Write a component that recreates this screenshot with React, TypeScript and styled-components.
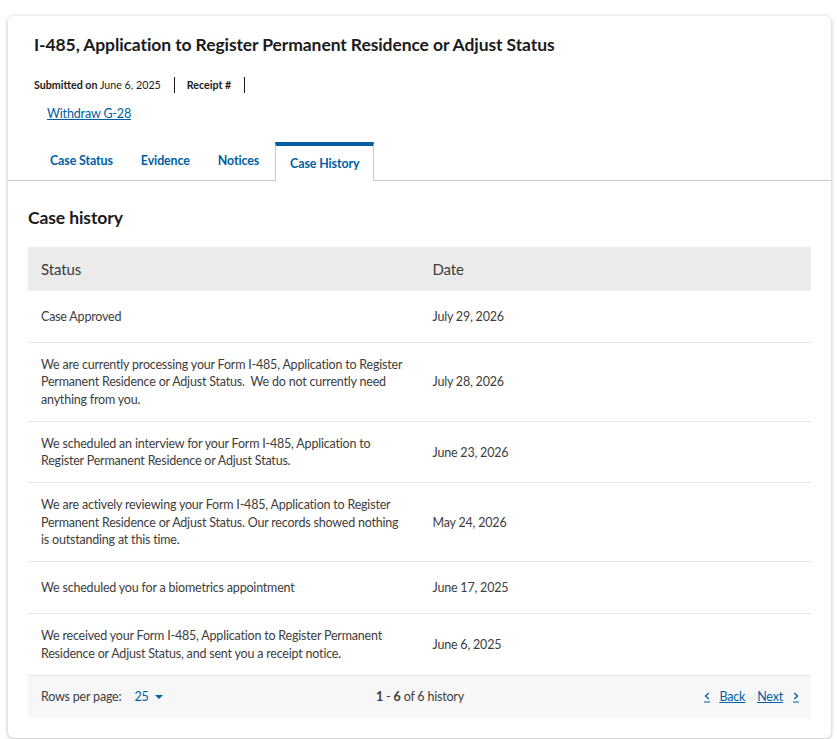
import React from "react";
import styled, { createGlobalStyle } from "styled-components";

const GlobalStyle = createGlobalStyle`
  html, body {
    margin: 0;
    background: #fff;
    font-family: Lato, "Liberation Sans", sans-serif;
    color: #1b1b1b;
  }
`;

const Page = styled.div`
  padding: 16px 6px 2px 8px;
`;

const Card = styled.section`
  background: #fff;
  border-radius: 6px;
  box-shadow: 0 1px 4px rgba(0, 0, 0, 0.28);
  padding-bottom: 20px;
`;

const Header = styled.header`
  padding: 16px 26px 0;
`;

const Title = styled.h1`
  margin: 0;
  font-size: 17.5px;
  letter-spacing: -0.1px;
  line-height: 26px;
  font-weight: 700;
  color: #1b1b1b;
`;

const Meta = styled.div`
  display: flex;
  align-items: center;
  margin-top: 19px;
  font-size: 10.7px;
  line-height: 16px;
  color: #1b1b1b;
`;

const MetaItem = styled.span`
  padding-right: 13px;
  margin-right: 12px;
  border-right: 1px solid #1b1b1b;
  b {
    font-weight: 700;
  }
`;

const TextLink = styled.a`
  color: #005ea2;
  text-decoration: underline;
  cursor: pointer;
`;

const WithdrawLink = styled(TextLink)`
  display: inline-block;
  margin: 12px 0 0 13px;
  font-size: 12.5px;
  letter-spacing: -0.15px;
  line-height: 18px;
`;

const TabBar = styled.nav`
  display: flex;
  align-items: flex-end;
  margin-top: 19px;
  padding-left: 28px;
  height: 38px;
  border-bottom: 1px solid #c9c9c9;
`;

const Tab = styled.a<{ $active?: boolean }>`
  display: block;
  padding: 0 14px;
  font-size: 12.4px;
  letter-spacing: -0.1px;
  font-weight: 700;
  color: #005ea2;
  text-decoration: none;
  height: 38px;
  line-height: 38px;
  ${({ $active }) =>
    $active &&
    `
    margin-left: 2px;
    height: 35px;
    line-height: 35px;
    margin-bottom: -1px;
    background: #fff;
    border-top: 4px solid #005ea2;
    border-left: 1px solid #c9c9c9;
    border-right: 1px solid #c9c9c9;
  `}
`;

const Body = styled.div`
  padding: 24px 20px 0;
`;

const SectionTitle = styled.h2`
  margin: 0 0 16px;
  font-size: 17.5px;
  letter-spacing: -0.1px;
  line-height: 26px;
  font-weight: 700;
  color: #1b1b1b;
`;

const Table = styled.table`
  width: 100%;
  border-collapse: collapse;
  table-layout: fixed;
`;

const HeadCell = styled.th`
  background: #ebebeb;
  text-align: left;
  font-weight: 400;
  font-size: 15px;
  letter-spacing: -0.1px;
  color: #3d3d3d;
  height: 44px;
  padding: 0 13px;
`;

const Row = styled.tr`
  border-bottom: 1px solid #e6e6e6;
`;

const Cell = styled.td`
  height: 25px;
  padding: 13px 13px;
  font-size: 12.5px;
  letter-spacing: -0.2px;
  line-height: 17.3px;
  color: #3d3d3d;
  vertical-align: middle;
`;

const Footer = styled.div`
  display: grid;
  grid-template-columns: 1fr auto 1fr;
  align-items: center;
  height: 42px;
  padding: 0 12px 0 13px;
  background: #f7f7f7;
  font-size: 12.5px;
  letter-spacing: -0.2px;
  color: #3d3d3d;
`;

const RowsPer = styled.div`
  display: flex;
  align-items: center;
  gap: 13px;
`;

const RowsSelect = styled.span`
  display: inline-flex;
  align-items: center;
  gap: 6px;
  color: #005ea2;
`;

const Caret = styled.span`
  width: 0;
  height: 0;
  border-left: 4px solid transparent;
  border-right: 4px solid transparent;
  border-top: 4px solid #005ea2;
`;

const Pager = styled.div`
  justify-self: end;
  display: flex;
  align-items: center;
  gap: 12px;
`;

const PagerLink = styled(TextLink)`
  display: inline-flex;
  align-items: center;
  gap: 10px;
`;

// small chevron with its own underline, as the link text has one
const Chevron = ({ dir }: { dir: "left" | "right" }) => (
  <svg width="6" height="13" viewBox="0 0 6 13" aria-hidden="true">
    <path
      d={dir === "left" ? "M4.8 3 L1.5 6 L4.8 9" : "M1.2 3 L4.5 6 L1.2 9"}
      fill="none"
      stroke="#005ea2"
      strokeWidth="1.3"
    />
    <line x1="0" y1="12" x2="6" y2="12" stroke="#005ea2" strokeWidth="1" />
  </svg>
);

const history = [
  { status: "Case Approved", date: "July 29, 2026" },
  {
    status:
      "We are currently processing your Form I-485, Application to Register Permanent Residence or Adjust Status.\u00a0 We do not currently need anything from you.",
    date: "July 28, 2026",
  },
  {
    status:
      "We scheduled an interview for your Form I-485, Application to Register Permanent Residence or Adjust Status.",
    date: "June 23, 2026",
  },
  {
    status:
      "We are actively reviewing your Form I-485, Application to Register Permanent Residence or Adjust Status. Our records showed nothing is outstanding at this time.",
    date: "May 24, 2026",
  },
  { status: "We scheduled you for a biometrics appointment", date: "June 17, 2025" },
  {
    status:
      "We received your Form I-485, Application to Register Permanent Residence or Adjust Status, and sent you a receipt notice.",
    date: "June 6, 2025",
  },
];

export default function App() {
  return (
    <Page>
      <GlobalStyle />
      <Card>
        <Header>
          <Title>I-485, Application to Register Permanent Residence or Adjust Status</Title>
          <Meta>
            <MetaItem>
              <b>Submitted on</b> June 6, 2025
            </MetaItem>
            <MetaItem>
              <b>Receipt #</b>
            </MetaItem>
          </Meta>
          <WithdrawLink>Withdraw G-28</WithdrawLink>
        </Header>
        <TabBar>
          <Tab>Case Status</Tab>
          <Tab>Evidence</Tab>
          <Tab>Notices</Tab>
          <Tab $active>Case History</Tab>
        </TabBar>
        <Body>
          <SectionTitle>Case history</SectionTitle>
          <Table>
            <thead>
              <tr>
                <HeadCell>Status</HeadCell>
                <HeadCell>Date</HeadCell>
              </tr>
            </thead>
            <tbody>
              {history.map((h) => (
                <Row key={h.date}>
                  <Cell>{h.status}</Cell>
                  <Cell>{h.date}</Cell>
                </Row>
              ))}
            </tbody>
          </Table>
          <Footer>
            <RowsPer>
              Rows per page:
              <RowsSelect>
                25 <Caret />
              </RowsSelect>
            </RowsPer>
            <span>
              <b>1</b> - <b>6</b> of 6 history
            </span>
            <Pager>
              <PagerLink>
                <Chevron dir="left" />
                <u>Back</u>
              </PagerLink>
              <PagerLink>
                <u>Next</u>
                <Chevron dir="right" />
              </PagerLink>
            </Pager>
          </Footer>
        </Body>
      </Card>
    </Page>
  );
}
